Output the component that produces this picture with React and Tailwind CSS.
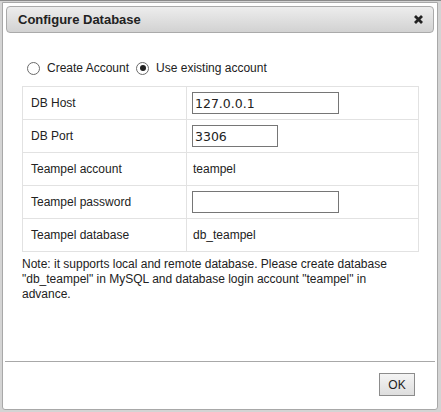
import { useState } from 'react';

const rows = [
  { label: 'DB Host', type: 'input', value: '127.0.0.1', width: 'w-[147px]' },
  { label: 'DB Port', type: 'input', value: '3306', width: 'w-[86px]' },
  { label: 'Teampel account', type: 'text', value: 'teampel' },
  { label: 'Teampel password', type: 'input', value: '', width: 'w-[147px]' },
  { label: 'Teampel database', type: 'text', value: 'db_teampel' },
];

const Radio = ({ checked, onClick, label }) => (
  <label className="flex items-center gap-[7px] cursor-pointer" onClick={onClick}>
    <span className="w-[13px] h-[13px] rounded-full border border-[#6b6b6b] bg-white flex items-center justify-center">
      {checked && <span className="w-[6px] h-[6px] rounded-full bg-[#222]" />}
    </span>
    <span>{label}</span>
  </label>
);

export default function App() {
  const [mode, setMode] = useState('existing');

  return (
    <div className="w-[441px] h-[412px] bg-[#d4d4d4] border-t border-[#8a8a8a] font-['Liberation_Sans',Arial,sans-serif] text-[12px] text-[#222]">
      <div className="ml-[2px] mt-[1px] w-[436px] h-[408px] bg-white border border-[#a8a8a8] rounded-b-[3px] flex flex-col">
        {/* Title bar */}
        <div className="mx-[3px] mt-[3px] h-[27px] rounded-[4px] border border-[#aaaaaa] bg-gradient-to-b from-[#ededed] to-[#d2d2d2] flex items-center justify-between pl-[11px] pr-[9px]">
          <span className="font-bold text-[13px] text-[#222]">Configure Database</span>
          <svg width="11" height="11" viewBox="0 0 11 11">
            <path d="M2 2 L9 9 M9 2 L2 9" stroke="#222" strokeWidth="2.8" strokeLinecap="butt" />
          </svg>
        </div>

        {/* Body */}
        <div className="flex-1 px-[19px] pt-[27px]">
          <div className="flex items-center gap-[7px] pl-[5px] h-[16px]">
            <Radio checked={mode === 'create'} onClick={() => setMode('create')} label="Create Account" />
            <Radio checked={mode === 'existing'} onClick={() => setMode('existing')} label="Use existing account" />
          </div>

          <table className="mt-[10px] w-[397px] border-collapse">
            <tbody>
              {rows.map((r) => (
                <tr key={r.label} className="h-[33px]">
                  <td className="w-[164px] border border-[#e2e2e2] pl-[8px]">{r.label}</td>
                  <td className="border border-[#e2e2e2] pl-[5px]">
                    {r.type === 'input' ? (
                      <input
                        defaultValue={r.value}
                        type={r.label.includes('password') ? 'password' : 'text'}
                        className={`${r.width} h-[22px] border border-[#767676] px-[2px] text-[12.5px] font-['DejaVu_Sans',sans-serif] text-[#222] outline-none`}
                      />
                    ) : (
                      <span className="pl-[1px]">{r.value}</span>
                    )}
                  </td>
                </tr>
              ))}
            </tbody>
          </table>

          <p className="mt-[5px] leading-[15px] pr-[20px]">
            Note: it supports local and remote database. Please create database "db_teampel" in MySQL and database login account "teampel" in advance.
          </p>
        </div>

        {/* Footer */}
        <div className="mx-[2px] border-t border-[#a8a8a8] h-[48px] flex items-start justify-end pr-[20px] pt-[11px]">
          <button className="w-[36px] h-[23px] border border-[#8c8c8c] bg-gradient-to-b from-[#f4f4f4] to-[#dedede] text-[12px] text-[#222]">
            OK
          </button>
        </div>
      </div>
    </div>
  );
}
